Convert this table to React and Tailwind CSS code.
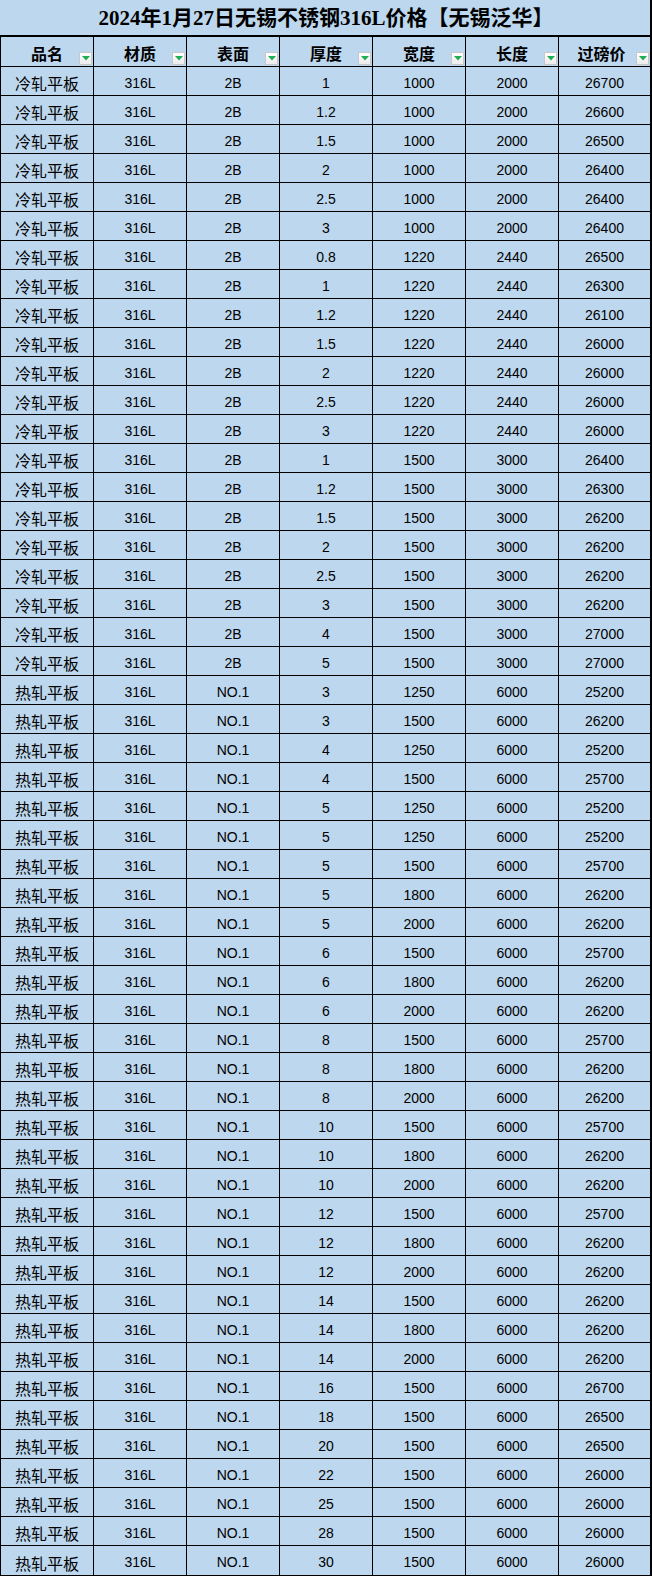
import React from 'react';

const HEADERS = ['品名', '材质', '表面', '厚度', '宽度', '长度', '过磅价'];

const COLD = [
  ['1', '1000', '2000', '26700'],
  ['1.2', '1000', '2000', '26600'],
  ['1.5', '1000', '2000', '26500'],
  ['2', '1000', '2000', '26400'],
  ['2.5', '1000', '2000', '26400'],
  ['3', '1000', '2000', '26400'],
  ['0.8', '1220', '2440', '26500'],
  ['1', '1220', '2440', '26300'],
  ['1.2', '1220', '2440', '26100'],
  ['1.5', '1220', '2440', '26000'],
  ['2', '1220', '2440', '26000'],
  ['2.5', '1220', '2440', '26000'],
  ['3', '1220', '2440', '26000'],
  ['1', '1500', '3000', '26400'],
  ['1.2', '1500', '3000', '26300'],
  ['1.5', '1500', '3000', '26200'],
  ['2', '1500', '3000', '26200'],
  ['2.5', '1500', '3000', '26200'],
  ['3', '1500', '3000', '26200'],
  ['4', '1500', '3000', '27000'],
  ['5', '1500', '3000', '27000'],
];

const HOT = [
  ['3', '1250', '6000', '25200'],
  ['3', '1500', '6000', '26200'],
  ['4', '1250', '6000', '25200'],
  ['4', '1500', '6000', '25700'],
  ['5', '1250', '6000', '25200'],
  ['5', '1250', '6000', '25200'],
  ['5', '1500', '6000', '25700'],
  ['5', '1800', '6000', '26200'],
  ['5', '2000', '6000', '26200'],
  ['6', '1500', '6000', '25700'],
  ['6', '1800', '6000', '26200'],
  ['6', '2000', '6000', '26200'],
  ['8', '1500', '6000', '25700'],
  ['8', '1800', '6000', '26200'],
  ['8', '2000', '6000', '26200'],
  ['10', '1500', '6000', '25700'],
  ['10', '1800', '6000', '26200'],
  ['10', '2000', '6000', '26200'],
  ['12', '1500', '6000', '25700'],
  ['12', '1800', '6000', '26200'],
  ['12', '2000', '6000', '26200'],
  ['14', '1500', '6000', '26200'],
  ['14', '1800', '6000', '26200'],
  ['14', '2000', '6000', '26200'],
  ['16', '1500', '6000', '26700'],
  ['18', '1500', '6000', '26500'],
  ['20', '1500', '6000', '26500'],
  ['22', '1500', '6000', '26000'],
  ['25', '1500', '6000', '26000'],
  ['28', '1500', '6000', '26000'],
  ['30', '1500', '6000', '26000'],
];

const ROWS = [
  ...COLD.map((r) => ['冷轧平板', '316L', '2B', ...r]),
  ...HOT.map((r) => ['热轧平板', '316L', 'NO.1', ...r]),
];

const GRID = 'grid grid-cols-[93px_93px_93px_93px_93px_93px_1fr]';

function FilterButton() {
  return (
    <span className="absolute bottom-[1px] right-[1px] flex h-[13px] w-[13px] items-center justify-center border border-[#c8c8c8] bg-gradient-to-b from-white to-[#ececec]">
      <svg width="8" height="5" viewBox="0 0 8 5">
        <path d="M0 0 L8 0 L4 4.5 Z" fill="#1fae54" />
      </svg>
    </span>
  );
}

export default function App() {
  return (
    <div className="w-[652px] bg-[#bdd7ee] text-black border-r-2 border-black">
      <div
        className="flex h-[37px] items-center justify-center border-b-2 border-black pl-[2px] pt-[2px] text-[21px] font-bold"
        style={{ fontFamily: '"Liberation Serif", "Noto Sans CJK SC", serif' }}
      >
        2024年1月27日无锡不锈钢316L价格【无锡泛华】
      </div>

      <div className="border-l border-black border-b-2">
        <div className={`${GRID} h-[30px] border-b border-black`}>
          {HEADERS.map((h, i) => (
            <div
              key={h}
              className={`relative flex items-center justify-center pt-[2px] text-[16px] font-bold ${
                i < 6 ? 'border-r border-black' : ''
              }`}
              style={{ fontFamily: '"Noto Sans CJK SC", sans-serif' }}
            >
              <span className={i === 6 ? 'pr-[6px]' : ''}>{h}</span>
              <FilterButton />
            </div>
          ))}
        </div>

        {ROWS.map((row, ri) => (
          <div
            key={ri}
            className={`${GRID} h-[29px] ${ri < ROWS.length - 1 ? 'border-b border-black' : ''}`}
          >
            {row.map((cell, ci) => (
              <div
                key={ci}
                className={`flex items-center justify-center pt-[4px] ${ci < 6 ? 'border-r border-black' : ''} ${
                  ci === 0 ? 'text-[16px]' : 'text-[14px]'
                }`}
                style={{
                  fontFamily:
                    ci === 0
                      ? '"Noto Sans CJK SC", sans-serif'
                      : '"Liberation Sans", "Noto Sans CJK SC", sans-serif',
                }}
              >
                {cell}
              </div>
            ))}
          </div>
        ))}
      </div>
    </div>
  );
}
